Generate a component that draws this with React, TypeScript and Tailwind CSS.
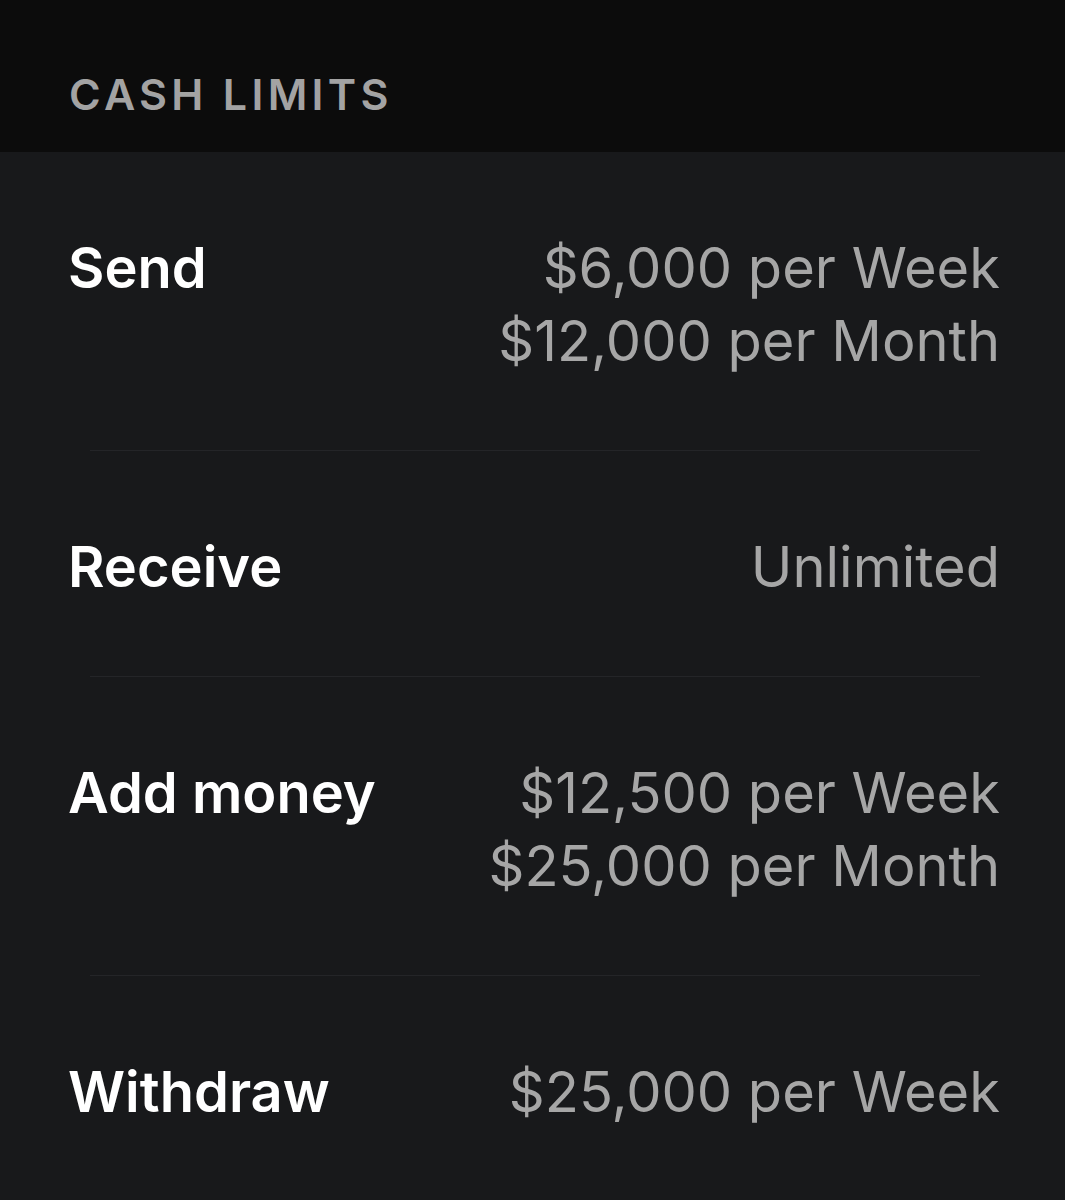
import React from 'react';

type LimitRow = {
  label: string;
  values: string[];
};

const limits: LimitRow[] = [
  { label: 'Send', values: ['$6,000 per Week', '$12,000 per Month'] },
  { label: 'Receive', values: ['Unlimited'] },
  { label: 'Add money', values: ['$12,500 per Week', '$25,000 per Month'] },
  { label: 'Withdraw', values: ['$25,000 per Week'] }
];

const App: React.FC = () => {
  return (
    <div className="min-h-[1200px] w-full bg-[#18191b] font-['Inter',sans-serif]">
      {/* section header */}
      <div className="h-[152px] bg-[#0c0c0c] pl-[69px] pt-[73px]">
        <h2 className="text-[43px] font-semibold leading-none tracking-[0.1em] text-[#a3a3a3]">CASH LIMITS</h2>
      </div>

      {/* limit rows, divided by an inset rule */}
      <div className="flex flex-col">
        {limits.map((row, index) => (
          <div key={row.label} className="flex flex-col">
            {index > 0 && <div className="ml-[90px] mr-[85px] h-px bg-[#242528]" />}
            <div className="flex justify-between pl-[68px] pr-[65px] pt-[80px] pb-[72px]">
              <div className="text-[56px] font-semibold leading-[73px] text-white">{row.label}</div>
              <div className="flex flex-col items-end">
                {row.values.map((value) => (
                  <div key={value} className="text-[56px] font-normal leading-[73px] text-[#a6a6a6]">
                    {value}
                  </div>
                ))}
              </div>
            </div>
          </div>
        ))}
      </div>
    </div>
  );
};

export default App;
